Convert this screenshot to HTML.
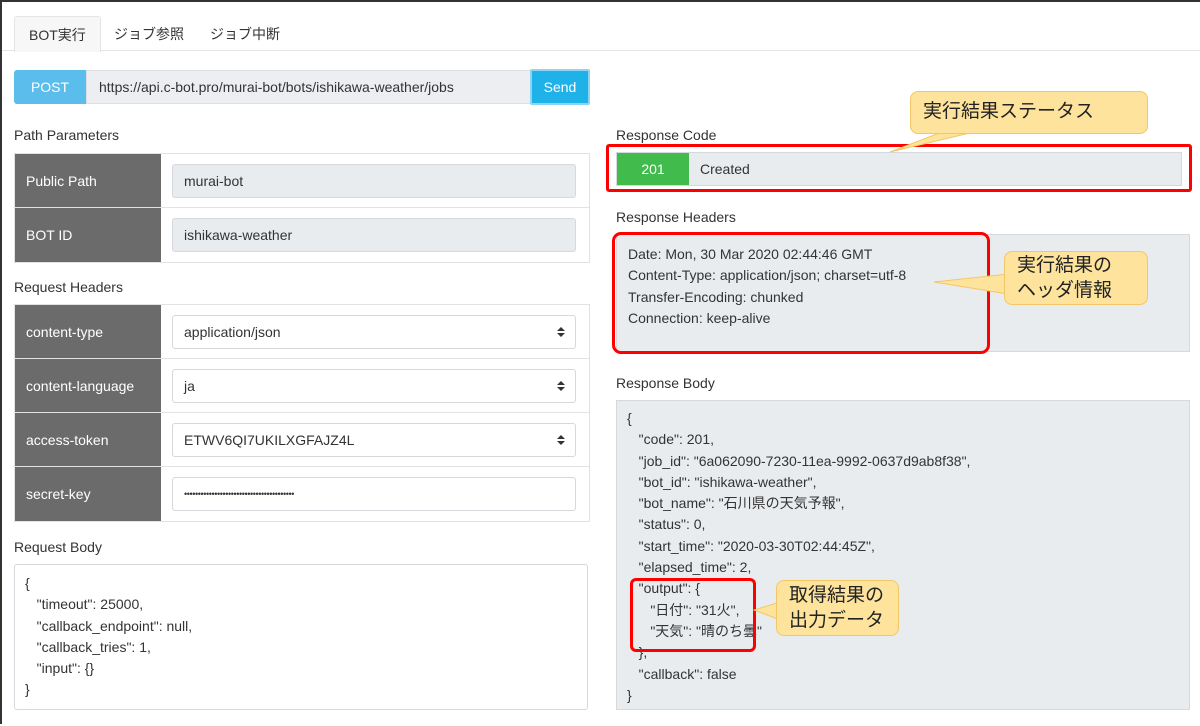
<!DOCTYPE html>
<html><head><meta charset="utf-8"><style>
*{box-sizing:border-box;margin:0;padding:0}
body{width:1200px;height:724px;background:#fff;font-family:"Liberation Sans","Noto Sans CJK JP",sans-serif;font-size:14px;color:#333;position:relative;overflow:hidden;border-left:2px solid #333;border-top:2px solid #333}
.a{position:absolute}
.tab{position:absolute;top:14px;height:36px;line-height:36px;font-size:14px;color:#333;padding:0 14px}
.lbl{position:absolute;font-size:14px;color:#333}
.tbl{position:absolute;left:14px;width:576px;border:1px solid #e2e2e2}
.row{height:54px;position:relative;border-bottom:1px solid #e2e2e2}
.row:last-child{border-bottom:none}
.th{position:absolute;left:0;top:0;width:146px;height:100%;background:#6b6b6b;color:#fff;padding-left:11px;display:flex;align-items:center}
.in{position:absolute;left:157px;right:13px;top:10px;height:34px;border:1px solid #d5d8dc;border-radius:3px;padding-left:11px;display:flex;align-items:center}
.gray{background:#e9ecef}
.ar{position:absolute;right:10px;top:10px;width:8px;height:12px}
.code{line-height:21.3px;font-size:14px;white-space:pre}
.red{position:absolute;border:3px solid #f00;border-radius:6px}
.call{position:absolute;background:#fde39c;border:1px solid #f3c766;border-radius:8px;font-size:19px;color:#222;line-height:26px;padding-left:12px}
</style></head><body>
<div class="a" style="left:0;top:48px;width:1200px;height:1px;background:#e4e4e4"></div>
<div class="tab" style="left:12px;background:#f7f7f7;border:1px solid #e4e4e4;border-bottom:none;border-radius:3px 3px 0 0">BOT実行</div>
<div class="tab" style="left:98px">ジョブ参照</div>
<div class="tab" style="left:194px">ジョブ中断</div>

<div class="a" style="left:12px;top:68px;width:72px;height:34px;background:#5bbdec;color:#fff;display:flex;align-items:center;justify-content:center;border-radius:3px 0 0 3px">POST</div>
<div class="a" style="left:84px;top:68px;width:446px;height:34px;background:#eceef1;border:1px solid #dcdfe3;display:flex;align-items:center;padding-left:12px">https://api.c-bot.pro/murai-bot/bots/ishikawa-weather/jobs</div>
<div class="a" style="left:528px;top:67px;width:60px;height:36px;background:#1fb2e8;color:#fff;display:flex;align-items:center;justify-content:center;border:2px solid #8ed5f3;border-radius:2px">Send</div>

<div class="lbl" style="left:12px;top:125px">Path Parameters</div>
<div class="tbl" style="left:12px;top:151px">
<div class="row"><div class="th">Public Path</div><div class="in gray">murai-bot</div></div>
<div class="row"><div class="th">BOT ID</div><div class="in gray">ishikawa-weather</div></div>
</div>

<div class="lbl" style="left:12px;top:277px">Request Headers</div>
<div class="tbl" style="left:12px;top:302px">
<div class="row"><div class="th">content-type</div><div class="in">application/json<svg class="ar" viewBox="0 0 8 12"><path d="M0 5L4 1L8 5ZM0 7L4 11L8 7Z" fill="#333"/></svg></div></div>
<div class="row"><div class="th">content-language</div><div class="in">ja<svg class="ar" viewBox="0 0 8 12"><path d="M0 5L4 1L8 5ZM0 7L4 11L8 7Z" fill="#333"/></svg></div></div>
<div class="row"><div class="th">access-token</div><div class="in">ETWV6QI7UKILXGFAJZ4L<svg class="ar" viewBox="0 0 8 12"><path d="M0 5L4 1L8 5ZM0 7L4 11L8 7Z" fill="#333"/></svg></div></div>
<div class="row"><div class="th">secret-key</div><div class="in" style="font-size:9px;letter-spacing:-0.4px">••••••••••••••••••••••••••••••••••••••••</div></div>
</div>

<div class="lbl" style="left:12px;top:537px">Request Body</div>
<div class="a code" style="left:12px;top:562px;width:574px;height:146px;border:1px solid #d5d8dc;border-radius:3px;padding:8px 0 0 10px">{
   "timeout": 25000,
   "callback_endpoint": null,
   "callback_tries": 1,
   "input": {}
}</div>

<div class="lbl" style="left:614px;top:125px">Response Code</div>
<div class="a" style="left:614px;top:150px;width:566px;height:34px;background:#e9ecef;border:1px solid #d5d8dc;display:flex;align-items:center">
<div style="width:72px;height:100%;background:#41bb4b;color:#fff;display:flex;align-items:center;justify-content:center">201</div><div style="padding-left:11px">Created</div></div>
<div class="red" style="left:604px;top:142px;width:586px;height:48px;border-radius:3px"></div>

<div class="lbl" style="left:614px;top:207px">Response Headers</div>
<div class="a code" style="left:614px;top:232px;width:574px;height:118px;background:#e9ecef;border:1px solid #d5d8dc;padding:9px 0 0 11px">Date: Mon, 30 Mar 2020 02:44:46 GMT
Content-Type: application/json; charset=utf-8
Transfer-Encoding: chunked
Connection: keep-alive</div>
<div class="red" style="left:610px;top:230px;width:378px;height:122px;border-radius:9px"></div>

<div class="lbl" style="left:614px;top:373px">Response Body</div>
<div class="a code" style="left:614px;top:398px;width:574px;height:310px;background:#e9ecef;border:1px solid #d5d8dc;padding:7px 0 0 10px">{
   "code": 201,
   "job_id": "6a062090-7230-11ea-9992-0637d9ab8f38",
   "bot_id": "ishikawa-weather",
   "bot_name": "石川県の天気予報",
   "status": 0,
   "start_time": "2020-03-30T02:44:45Z",
   "elapsed_time": 2,
   "output": {
      "日付": "31火",
      "天気": "晴のち曇"
   },
   "callback": false
}</div>
<div class="red" style="left:628px;top:576px;width:126px;height:74px;border-radius:6px"></div>

<svg class="a" style="left:0;top:0" width="1200" height="724">
<polygon points="940,130 972,130 888,150" fill="#fde39c" stroke="#f3c766"/>
<polygon points="1006,272 1006,292 932,280" fill="#fde39c" stroke="#f3c766"/>
<polygon points="778,600 778,618 752,608" fill="#fde39c" stroke="#f3c766"/>
</svg>
<div class="call" style="left:908px;top:89px;width:238px;height:43px;padding-top:7px">実行結果ステータス</div>
<div class="call" style="left:1002px;top:249px;width:144px;height:54px;padding-top:1px;line-height:25px">実行結果の<br>ヘッダ情報</div>
<div class="call" style="left:774px;top:578px;width:123px;height:56px;padding-top:2px;line-height:25px">取得結果の<br>出力データ</div>
</body></html>
